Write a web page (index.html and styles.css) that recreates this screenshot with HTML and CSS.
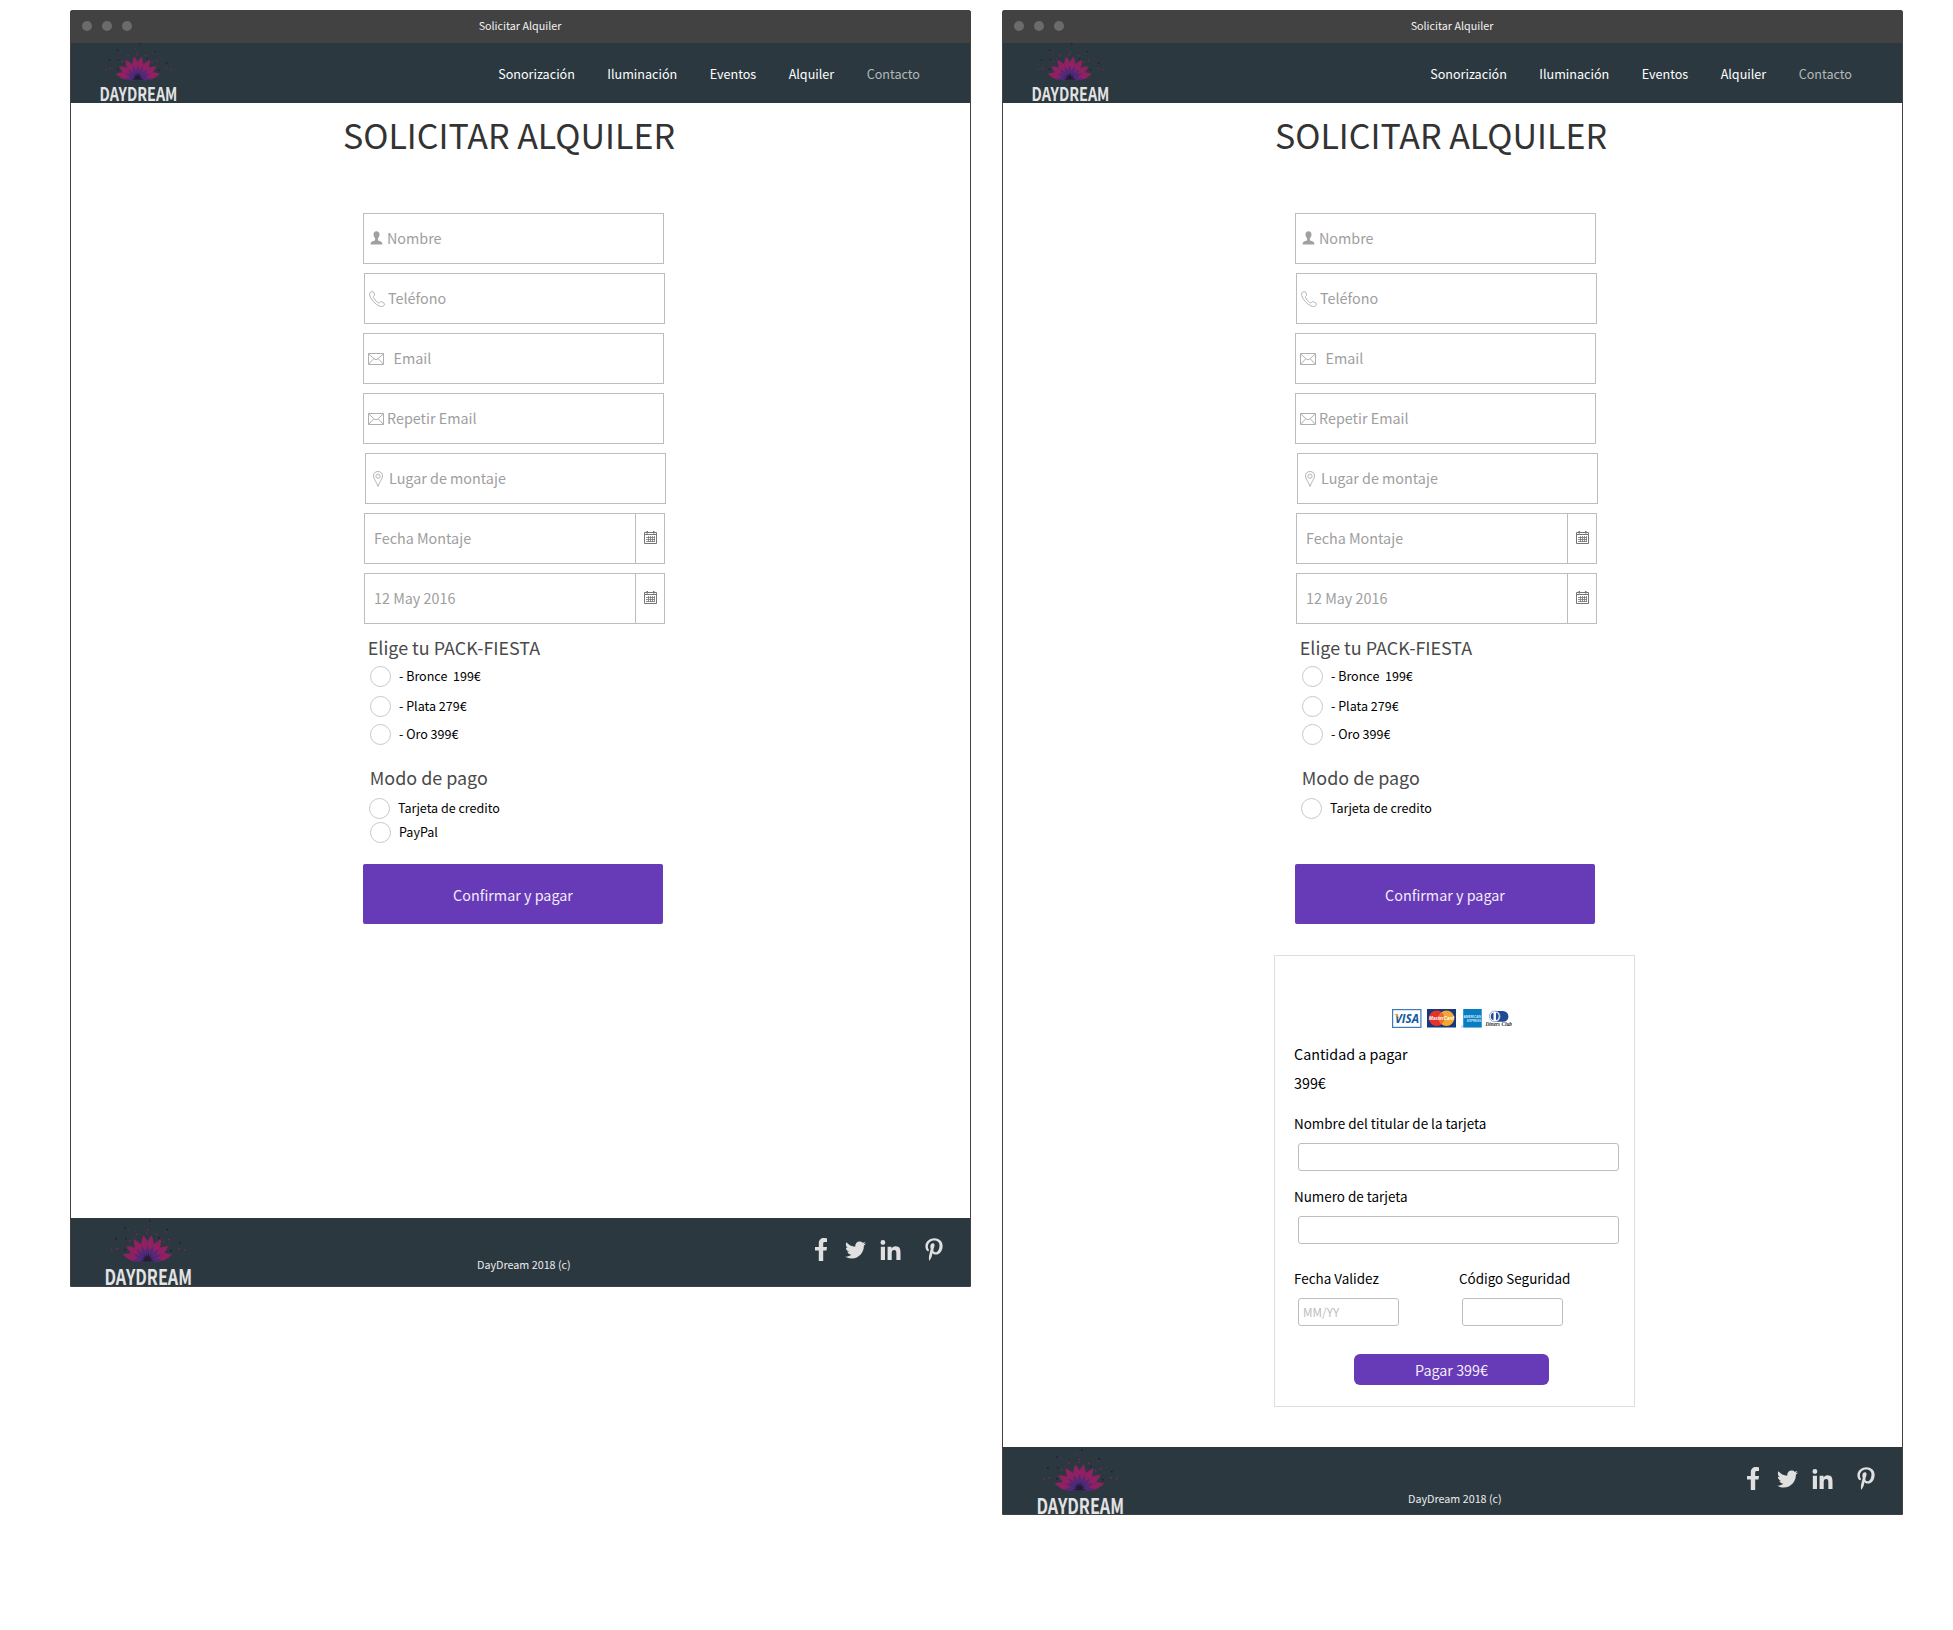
FILE: index.html
```html
<!DOCTYPE html>
<html lang="es">
<head>
<meta charset="utf-8">
<title>Solicitar Alquiler</title>
<link rel="stylesheet" href="styles.css">
</head>
<body>
<svg class="defs" width="0" height="0" aria-hidden="true">
  <defs>
    <g id="lotus">
      <g fill="#8f2062">
        <path id="petal" d="M0 0C-2-4-4.600-11-4-15C-3.400-19-1.500-23 0-25.500C1.500-23 3.400-19 4-15C4.600-11 2-4 0 0Z" transform="rotate(-77)"/>
        <use href="#petal" transform="rotate(154)"/>
        <use href="#petal" transform="rotate(21)"/>
        <use href="#petal" transform="rotate(133)"/>
        <use href="#petal" transform="rotate(44)"/>
        <use href="#petal" transform="rotate(110)"/>
        <use href="#petal" transform="rotate(67.500)"/>
        <use href="#petal" transform="rotate(86.500)"/>
      </g>
      <g fill="#4f2a78">
        <path id="sepal" d="M0 0C-2.600-5-2.200-10 0-15C2.200-10 2.600-5 0 0Z"/>
        <use href="#sepal" transform="rotate(22)"/><use href="#sepal" transform="rotate(-22)"/>
        <use href="#sepal" transform="rotate(45)"/><use href="#sepal" transform="rotate(-45)"/>
        <use href="#sepal" transform="rotate(66)"/><use href="#sepal" transform="rotate(-66)"/>
        <use href="#sepal" transform="rotate(90)"/><use href="#sepal" transform="rotate(-90)"/>
      </g>
      <path d="M-7 1L-3-1L-6-3L-2.500-2L-4-6L-1.500-3L-1-7L0-3.500L1-7L1.500-3L4-6L2.500-2L6-3L3-1L7 1Z" fill="#241b38"/>
    </g>
    <symbol id="logo" viewBox="0 0 87 66" overflow="visible">
      <use href="#lotus" transform="translate(42.5 40.3)"/>
      <g fill="#8f2062">
        <rect x="6" y="29" width="1.4" height="1.4"/><rect x="11" y="28" width="1.4" height="1.4"/><rect x="79" y="29" width="1.4" height="1.4"/><rect x="73.500" y="28" width="1.4" height="1.4"/>
        <rect x="31" y="13.500" width="1.4" height="1.4"/><rect x="41" y="12.500" width="1.4" height="1.4"/><rect x="51" y="13.500" width="1.4" height="1.4"/><rect x="24" y="20" width="1.4" height="1.4"/><rect x="58" y="21" width="1.4" height="1.4"/><rect x="63" y="19" width="1.4" height="1.4"/><rect x="42" y="9.500" width="1.4" height="1.4"/>
      </g>
      <g fill="#4f2a78">
        <rect x="39" y="5.500" width="1.4" height="1.4"/><rect x="23" y="9" width="1.4" height="1.4"/><rect x="29" y="11" width="1.2" height="1.2"/><rect x="60" y="11" width="1.4" height="1.4"/><rect x="69" y="18" width="1.2" height="1.2"/><rect x="27" y="17" width="1.2" height="1.2"/><rect x="13" y="28" width="1.2" height="1.2"/>
      </g>
      <g fill="#1d1c2c">
        <rect x="44" y="0" width="1.4" height="1.400"/><rect x="19" y="7.500" width="1.6" height="1.4"/><rect x="61" y="9" width="1.6" height="1.4"/><rect x="10" y="18" width="1.6" height="1.6"/><rect x="20" y="18" width="1.4" height="1.4"/><rect x="74" y="22" width="1.6" height="1.4"/><rect x="19" y="29" width="1.6" height="1.4"/><rect x="65" y="30" width="1.6" height="1.4"/><rect x="53" y="17" width="1.4" height="1.4"/>
      </g>
      <text x="-.5" y="64.800" class="logo-word" textLength="87.500" lengthAdjust="spacingAndGlyphs">DAYDREAM</text>
    </symbol>
    <symbol id="user" viewBox="0 0 12 14">
      <path d="M6 .2C4 .2 2.900 1.500 3 3.600C3.100 5.400 3.800 6.500 4.600 7.300V9C4.300 10 1.500 10.200.6 11.300L0 13.500H12L11.400 11.300C10.500 10.200 7.700 10 7.400 9V7.300C8.200 6.500 8.900 5.400 9 3.600C9.100 1.500 8 .2 6 .2Z" fill="#a0a0a0"/>
    </symbol>
    <symbol id="phone" viewBox="0 0 16 16">
      <path d="M3.600.6L1.500 1.200C.3 2 .3 4 1.300 6.100C3 9.800 6.200 13.100 10 14.900C12 15.800 13.700 15.900 14.600 14.900L15.500 13.300C15.600 12.800 15.400 12.500 15 12.200L12.500 10.700C12 10.400 11.600 10.500 11.200 10.800L10.200 11.800C9.700 12.200 9.200 11.900 8.500 11.300C6.900 10.100 5.400 8.300 4.500 6.700C4.200 6.200 4.200 5.800 4.600 5.400L5.400 4.600C5.700 4.200 5.700 3.800 5.500 3.300L4.500 1C4.300.6 4 .5 3.600.6Z" fill="none" stroke="#a6a6a6" stroke-width=".85"/>
    </symbol>
    <symbol id="mail" viewBox="0 0 16 12">
      <path d="M.5.5H15.500V11.500H.5ZM.5.800L6.200 5.900Q8 7.800 9.800 5.900L15.500.8M.7 11.200L5.500 6M15.300 11.200L10.500 6" fill="none" stroke="#a6a6a6" stroke-width=".9"/>
    </symbol>
    <symbol id="pin" viewBox="0 0 10 16">
      <path d="M5 .5C2.300.5.5 2.400.5 4.900C.5 8 3.600 11 5 15.400C6.400 11 9.500 8 9.500 4.900C9.500 2.400 7.700.5 5 .5Z" fill="none" stroke="#a6a6a6" stroke-width=".85"/>
      <circle cx="5" cy="5.200" r="2.100" fill="none" stroke="#a6a6a6" stroke-width=".85"/>
    </symbol>
    <symbol id="calendar" viewBox="0 0 13 13">
      <path d="M.5 1.500H12.500V12.500H.5ZM.5 3.500H12.500" fill="none" stroke="#757575"/>
      <path d="M2 6.500H11M2 8.500H11M2 10.500H11M4.500 5V11M6.500 5V11M8.500 5V11M10.500 5V11" fill="none" stroke="#757575" stroke-width=".8"/>
      <path d="M2.500 0H4V2.500H2.500ZM9 0H10.500V2.500H9Z" fill="#757575"/>
    </symbol>
    <symbol id="facebook" viewBox="0 0 12 23">
      <path d="M12 .2V4H9.700C8.300 4 8.200 4.700 8.200 6V9H12L11.500 12.600H8.200V23H3.800V12.600H0V9H3.800V5.600C3.800 2 5.800.1 9 .1Z"/>
    </symbol>
    <symbol id="twitter" viewBox="0 48 512 416">
      <path d="M459.370 151.716c.325 4.548.325 9.097.325 13.645 0 138.720-105.583 298.558-298.558 298.558-59.452 0-114.680-17.219-161.137-47.106 8.447.974 16.568 1.299 25.340 1.299 49.055 0 94.213-16.568 130.274-44.832-46.132-.975-84.792-31.188-98.112-72.772 6.498.974 12.995 1.624 19.818 1.624 9.421 0 18.843-1.300 27.614-3.573-48.081-9.747-84.143-51.980-84.143-102.985v-1.299c13.969 7.797 30.214 12.670 47.431 13.319-28.264-18.843-46.781-51.005-46.781-87.391 0-19.492 5.197-37.360 14.294-52.954 51.655 63.675 129.300 105.258 216.365 109.807-1.624-7.797-2.599-15.918-2.599-24.040 0-57.828 46.782-104.934 104.934-104.934 30.213 0 57.502 12.670 76.670 33.137 23.715-4.548 46.456-13.320 66.599-25.340-7.798 24.366-24.366 44.833-46.132 57.827 21.117-2.273 41.584-8.122 60.426-16.243-14.292 20.791-32.161 39.308-52.628 54.253z"/>
    </symbol>
    <symbol id="linkedin" viewBox="0 0 448 448">
      <path d="M100.280 448H7.400V148.900h92.880zM53.790 108.100C24.090 108.100 0 83.500 0 53.800a53.790 53.790 0 0 1 107.580 0c0 29.700-24.100 54.300-53.790 54.300zM447.900 448h-92.680V302.400c0-34.700-.7-79.200-48.290-79.200-48.290 0-55.690 37.700-55.690 76.700V448h-92.780V148.900h89.080v40.800h1.300c12.400-23.500 42.690-48.300 87.880-48.300 94 0 111.280 61.900 111.280 142.300V448z"/>
    </symbol>
    <symbol id="pinterest" viewBox="0 0 384 512">
      <path d="M204 6.500C101.400 6.500 0 74.900 0 185.600 0 256 39.600 296 63.600 296c9.900 0 15.600-27.600 15.600-35.400 0-9.300-23.700-29.100-23.700-67.800 0-80.400 61.200-137.400 140.400-137.400 68.100 0 118.500 38.700 118.500 109.800 0 53.100-21.300 152.700-90.300 152.700-24.900 0-46.200-18-46.200-43.800 0-37.800 26.400-74.400 26.400-113.400 0-66.200-93.900-54.200-93.900 25.800 0 16.800 2.100 35.400 9.600 50.700-13.800 59.400-42 147.900-42 209.100 0 18.900 2.700 37.500 4.500 56.400 3.400 3.800 1.700 3.400 6.900 1.500 50.400-69 48.600-82.500 71.400-172.800 12.300 23.400 44.100 36 69.300 36 106.200 0 153.900-103.500 153.900-196.800C384 71.300 298.200 6.500 204 6.500z"/>
    </symbol>
  </defs>
</svg>

<section class="window">
  <header class="titlebar"><span class="dots"><i></i><i></i><i></i></span><span class="titlebar-text">Solicitar Alquiler</span></header>
  <nav class="nav">
    <svg class="nav-logo" viewBox="0 0 87 66"><use href="#logo"/></svg>
    <div class="nav-links"><a>Sonorización</a><a>Iluminación</a><a>Eventos</a><a>Alquiler</a><a class="muted">Contacto</a></div>
  </nav>
  <main class="main">
    <h1 class="title">SOLICITAR ALQUILER</h1>
    <form class="form">
      <div class="field"><svg class="i-user"><use href="#user"/></svg><span>Nombre</span></div>
      <div class="field shift-1"><svg class="i-phone"><use href="#phone"/></svg><span>Teléfono</span></div>
      <div class="field email"><svg class="i-mail"><use href="#mail"/></svg><span>Email</span></div>
      <div class="field"><svg class="i-mail"><use href="#mail"/></svg><span>Repetir Email</span></div>
      <div class="field shift-2"><svg class="i-pin"><use href="#pin"/></svg><span>Lugar de montaje</span></div>
      <div class="field date shift-1"><span>Fecha Montaje</span><b><svg class="i-cal"><use href="#calendar"/></svg></b></div>
      <div class="field date shift-1"><span>12 May 2016</span><b><svg class="i-cal"><use href="#calendar"/></svg></b></div>
      <h2 class="group-title pack">Elige tu PACK-FIESTA</h2>
      <label class="option bronze"><i></i><span>- Bronce&nbsp; 199€</span></label>
      <label class="option silver"><i></i><span>- Plata 279€</span></label>
      <label class="option gold"><i></i><span>- Oro 399€</span></label>
      <h2 class="group-title payment">Modo de pago</h2>
      <label class="option card-option"><i></i><span>Tarjeta de credito</span></label>
      <label class="option paypal"><i></i><span>PayPal</span></label>
      <div class="confirm">Confirmar y pagar</div>
    </form>
  </main>
  <footer class="footer">
    <svg class="footer-logo" viewBox="0 0 87 66"><use href="#logo"/></svg>
    <span class="copyright">DayDream 2018 (c)</span>
    <div class="social"><svg class="s-fb"><use href="#facebook"/></svg><svg class="s-tw"><use href="#twitter"/></svg><svg class="s-in"><use href="#linkedin"/></svg><svg class="s-pi"><use href="#pinterest"/></svg></div>
  </footer>
</section>

<section class="window tall">
  <header class="titlebar"><span class="dots"><i></i><i></i><i></i></span><span class="titlebar-text">Solicitar Alquiler</span></header>
  <nav class="nav">
    <svg class="nav-logo" viewBox="0 0 87 66"><use href="#logo"/></svg>
    <div class="nav-links"><a>Sonorización</a><a>Iluminación</a><a>Eventos</a><a>Alquiler</a><a class="muted">Contacto</a></div>
  </nav>
  <main class="main">
    <h1 class="title">SOLICITAR ALQUILER</h1>
    <form class="form">
      <div class="field"><svg class="i-user"><use href="#user"/></svg><span>Nombre</span></div>
      <div class="field shift-1"><svg class="i-phone"><use href="#phone"/></svg><span>Teléfono</span></div>
      <div class="field email"><svg class="i-mail"><use href="#mail"/></svg><span>Email</span></div>
      <div class="field"><svg class="i-mail"><use href="#mail"/></svg><span>Repetir Email</span></div>
      <div class="field shift-2"><svg class="i-pin"><use href="#pin"/></svg><span>Lugar de montaje</span></div>
      <div class="field date shift-1"><span>Fecha Montaje</span><b><svg class="i-cal"><use href="#calendar"/></svg></b></div>
      <div class="field date shift-1"><span>12 May 2016</span><b><svg class="i-cal"><use href="#calendar"/></svg></b></div>
      <h2 class="group-title pack">Elige tu PACK-FIESTA</h2>
      <label class="option bronze"><i></i><span>- Bronce&nbsp; 199€</span></label>
      <label class="option silver"><i></i><span>- Plata 279€</span></label>
      <label class="option gold"><i></i><span>- Oro 399€</span></label>
      <h2 class="group-title payment">Modo de pago</h2>
      <label class="option card-option"><i></i><span>Tarjeta de credito</span></label>
      <div class="confirm spaced">Confirmar y pagar</div>
    </form>
    <form class="payment-card">
      <div class="brands">
        <svg width="30" height="19" viewBox="0 0 30 19"><rect x=".6" y=".6" width="28.300" height="17.800" fill="#fff" stroke="#3d7ab8" stroke-width="1.200"/><text x="3" y="13.500" class="visa" textLength="24" lengthAdjust="spacingAndGlyphs">VISA</text><path d="M2 5H5.500L7.300 10Q5.500 6.500 2 5Z" fill="#f2a830"/></svg>
        <svg width="29" height="19" viewBox="0 0 29 19"><rect width="29" height="18.500" fill="#16397c"/><circle cx="9.700" cy="9.300" r="7.800" fill="#e6322b"/><circle cx="19.500" cy="9.300" r="7.800" fill="#f6a732"/><path d="M14.600 3.300Q17.500 6 17.500 9.300T14.600 15.300Q11.800 12.600 11.800 9.300T14.600 3.300Z" fill="#ec6a2c"/><text x="2" y="11.300" class="mc" textLength="25" lengthAdjust="spacingAndGlyphs">MasterCard</text></svg>
        <svg width="21" height="19" viewBox="0 0 21 19"><path d="M2 0H20.500V18.500H0V16.500H2Z" fill="#b9dcf0"/><path d="M2.300 0H20.700V18.500H2.300Z" fill="#087dc3"/><text x="2.500" y="8.800" class="amex" textLength="17.500" lengthAdjust="spacingAndGlyphs">AMERICAN</text><text x="6" y="12.900" class="amex" textLength="14" lengthAdjust="spacingAndGlyphs">EXPRESS</text></svg>
        <svg class="diners-logo" width="28" height="19" viewBox="0 0 28 19"><path d="M10 2H18A5.400 5.400 0 0 1 18 12.800H10Z" fill="#204a94"/><circle cx="9.700" cy="7.400" r="5.400" fill="#fff" stroke="#7b9ac8" stroke-width=".8"/><path d="M8.500 3.600A4 4 0 0 0 8.500 11.200ZM11 3.600A4 4 0 0 1 11 11.200Z" fill="#204a94"/><text x=".5" y="17" class="diners" textLength="26.500" lengthAdjust="spacingAndGlyphs">Diners Club</text></svg>
      </div>
      <p class="amount-label">Cantidad a pagar</p>
      <p class="amount">399€</p>
      <label class="card-label holder">Nombre del titular de la tarjeta</label>
      <div class="card-input"></div>
      <label class="card-label number">Numero de tarjeta</label>
      <div class="card-input"></div>
      <div class="split">
        <div class="expiry"><label class="card-label">Fecha Validez</label><div class="card-input small">MM/YY</div></div>
        <div class="cvv"><label class="card-label">Código Seguridad</label><div class="card-input small"></div></div>
      </div>
      <div class="pay">Pagar 399€</div>
    </form>
  </main>
  <footer class="footer">
    <svg class="footer-logo" viewBox="0 0 87 66"><use href="#logo"/></svg>
    <span class="copyright">DayDream 2018 (c)</span>
    <div class="social"><svg class="s-fb"><use href="#facebook"/></svg><svg class="s-tw"><use href="#twitter"/></svg><svg class="s-in"><use href="#linkedin"/></svg><svg class="s-pi"><use href="#pinterest"/></svg></div>
  </footer>
</section>
</body>
</html>
```
FILE: styles.css
```css
* { box-sizing: border-box; }
body {
  margin: 0;
  padding: 10px 0 0 70px;
  display: flex;
  align-items: flex-start;
  gap: 31px;
  background: #fff;
  font-family: "Noto Sans CJK JP", "Noto Sans", sans-serif;
  color: #111;
}
svg { display: block; flex: none; overflow: visible; }
.defs { position: absolute; }
h1, h2, p { margin: 0; font-weight: 400; }

.window {
  width: 901px;
  height: 1277px;
  flex: none;
  display: flex;
  flex-direction: column;
  border: 1px solid #424242;
  border-radius: 2px 2px 0 0;
}
.window.tall { height: 1505px; }

.titlebar {
  height: 32px;
  display: grid;
  grid-template-columns: 1fr auto 1fr;
  align-items: center;
  padding: 0 1px 3px 0;
  background: #424242;
  color: #f2f2f2;
  font-size: 10.75px;
  line-height: 16px;
}
.dots { display: flex; gap: 10px; padding-left: 10.5px; }
.dots i { width: 10px; height: 10px; border-radius: 50%; background: #6b6b6b; }

.nav {
  height: 60px;
  display: flex;
  justify-content: space-between;
  padding: 0 50px 0 29px;
  background: #2c3840;
}
.nav-logo { width: 77.4px; height: 58.7px; }
.nav-links {
  display: flex;
  align-items: center;
  gap: 32.4px;
  font-size: 12.6px;
  color: #fff;
}
.nav-links .muted { color: #b5b8ba; }

.logo-word {
  font: 700 20.8px "Noto Sans CJK JP", sans-serif;
  fill: #e3e3e3;
}

.main { flex: 1; }
.title {
  padding: 2px 23px 0 0;
  text-align: center;
  font-size: 34px;
  line-height: 60px;
  color: #333;
}
.form {
  width: 303px;
  margin: 48px 0 0 292px;
  display: flex;
  flex-direction: column;
}
.field {
  width: 301px;
  height: 51px;
  margin-bottom: 9px;
  padding: 0 0 2px 6px;
  display: flex;
  align-items: center;
  border: 1px solid #bdbdbd;
  font-size: 14.35px;
  line-height: 20px;
  color: #9e9e9e;
}
.shift-1 { margin-left: 1px; }
.shift-2 { margin-left: 2px; }
.i-user { width: 13px; height: 14px; margin-right: 4px; }
.i-phone { width: 16px; height: 16px; margin: 2px 3px 0 -2px; }
.i-mail { width: 16px; height: 12px; margin: 2px 3px 0 -2px; }
.email .i-mail { margin-right: 9.500px; }
.i-pin { width: 10px; height: 16px; margin: 2px 6px 0 1px; }
.date { padding: 0 0 0 9px; }
.date span { flex: 1; padding-bottom: 2px; }
.date b {
  width: 29px;
  height: 49px;
  padding: 17px 0 0 8px;
  border-left: 1px solid #bdbdbd;
}
.i-cal { width: 13px; height: 13px; }

.group-title { font-size: 17.92px; line-height: 30px; color: #4a4a4a; }
.pack { margin: -1px 0 4px 4.8px; }
.payment { margin: 17px 0 6px 6.8px; }
.option {
  height: 21px;
  margin-left: 7px;
  display: flex;
  align-items: center;
  gap: 8px;
  font-size: 12.54px;
  color: #000;
}
.option i {
  width: 21px;
  height: 21px;
  border: 1px solid #c8c8c8;
  border-radius: 50%;
}
.option span { line-height: 18px; padding-bottom: 1px; }
.silver { margin-top: 9px; }
.gold { margin-top: 7px; }
.card-option { margin-left: 6px; }
.paypal { margin-top: 3px; }
.confirm {
  width: 300px;
  height: 60px;
  margin-top: 21px;
  border-radius: 2px;
  background: #673ab7;
  color: #f2edf9;
  text-align: center;
  font-size: 14.35px;
  line-height: 61px;
}
.confirm.spaced { margin-top: 45px; }

.payment-card {
  width: 361px;
  height: 452px;
  margin: 31px 0 0 271px;
  padding: 53px 0 0 19px;
  border: 1px solid #dedede;
  color: #000;
}
.brands { display: flex; gap: 5px; padding-left: 98px; }
.visa { font: italic 700 12.5px "Open Sans", sans-serif; fill: #14599f; }
.mc { font: italic 700 5.500px "Liberation Sans", sans-serif; fill: #fff; }
.amex { font: 700 4.200px "Liberation Sans", sans-serif; fill: #cfe8f6; }
.diners { font: italic 700 5.500px "Liberation Serif", serif; fill: #2a2a30; }
.diners-logo { margin-left: -2px; }
.amount-label, .amount { font-size: 14.32px; line-height: 24px; }
.amount-label { margin-top: 14px; }
.amount { margin-top: 5px; }
.card-label { display: block; font-size: 13.45px; line-height: 24px; }
.holder { margin-top: 16px; }
.number { margin-top: 13px; }
.card-input {
  width: 321px;
  height: 28px;
  margin: 8px 0 0 4px;
  border: 1px solid #bdbdbd;
  border-radius: 3px;
}
.split { display: flex; margin-top: 22px; }
.expiry { width: 165px; }
.cvv .card-input { margin-left: 3px; }
.card-input.small {
  width: 101px;
  padding-left: 4px;
  font-size: 11.75px;
  line-height: 25px;
  color: #bdbdbd;
}
.pay {
  width: 195px;
  height: 31px;
  margin: 28px 0 0 60px;
  border-radius: 6px;
  background: #673ab7;
  color: #f2edf9;
  text-align: center;
  font-size: 14.35px;
  line-height: 31px;
}

.footer {
  height: 68px;
  display: flex;
  padding: 0 27px 0 34px;
  background: #2c3840;
}
.tall .footer { height: 67px; }
.footer-logo { width: 87px; height: 66px; margin-top: 2px; }
.copyright {
  margin: 38px 0 0 285px;
  font-size: 10.75px;
  line-height: 18px;
  color: #ebebeb;
}
.tall .copyright { margin: 43px 0 0 284px; }
.social { display: flex; margin-left: auto; padding-top: 20px; fill: #e0e0e0; }
.s-fb { width: 12px; height: 23px; }
.s-tw { width: 21px; height: 18px; margin: 3px 0 0 18px; }
.s-in { width: 21px; height: 20px; margin: 2px 0 0 14px; }
.s-pi { width: 18px; height: 23px; margin: 0 0 0 24px; }
```
